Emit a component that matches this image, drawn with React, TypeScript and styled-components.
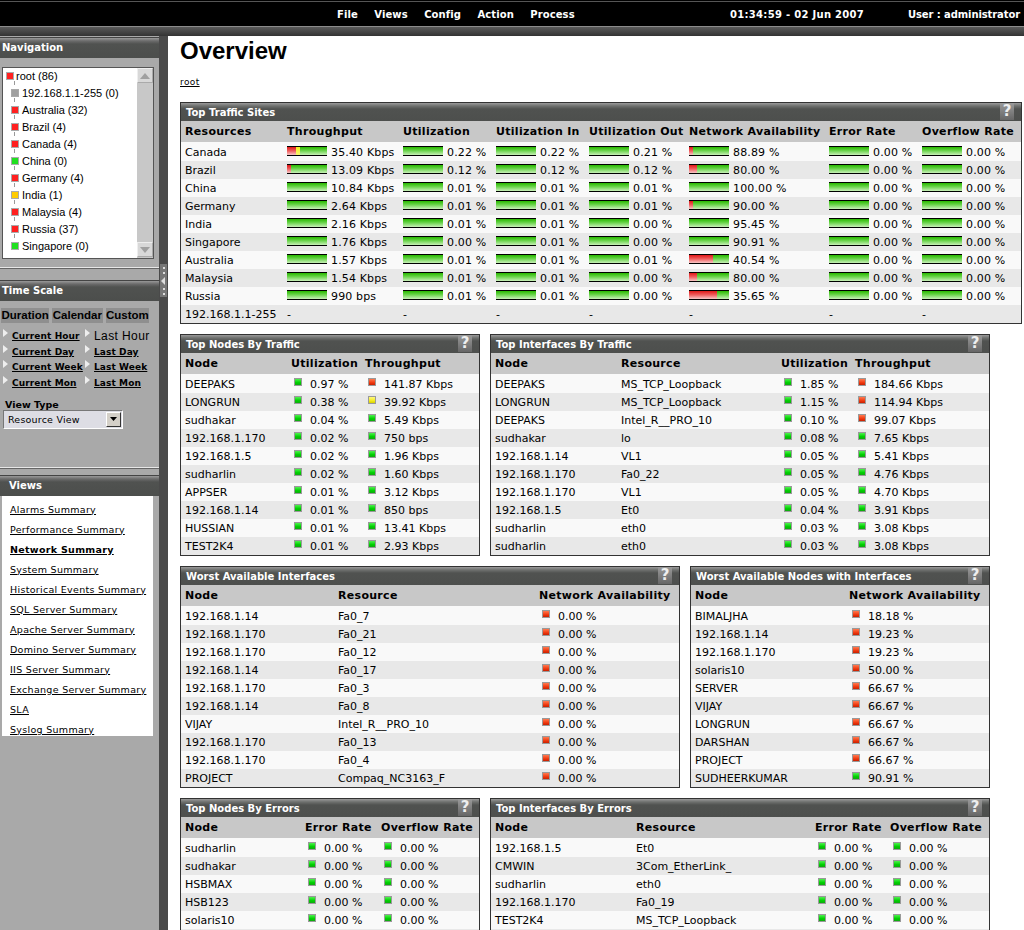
import React, { FC } from "react";
import styled, { createGlobalStyle } from "styled-components";

type Tone = "g" | "r" | "y";
type Cell = string | { tone: Tone; text: string } | { red: number; yellow?: number; text: string };

const GlobalStyle = createGlobalStyle`
  html, body {
    margin: 0;
    padding: 0;
    height: 100%;
    overflow: hidden;
    background: #fff;
    font-family: "DejaVu Sans", Verdana, sans-serif;
    font-size: 11px;
    color: #000;
  }
`;

const g = (text: string): Cell => ({ tone: "g", text });
const r = (text: string): Cell => ({ tone: "r", text });
const y = (text: string): Cell => ({ tone: "y", text });
const b = (text: string, red = 0, yellow = 0): Cell => ({ red, yellow, text });

const zero = [b("0.00 %"), b("0.00 %")];

const trafficSites: Cell[][] = [
  ["Canada", b("35.40 Kbps", 9, 4), b("0.22 %"), b("0.22 %"), b("0.21 %"), b("88.89 %", 4), ...zero],
  ["Brazil", b("13.09 Kbps", 4), b("0.12 %"), b("0.12 %"), b("0.12 %"), b("80.00 %", 8), ...zero],
  ["China", b("10.84 Kbps"), b("0.01 %"), b("0.01 %"), b("0.01 %"), b("100.00 %"), ...zero],
  ["Germany", b("2.64 Kbps"), b("0.01 %"), b("0.01 %"), b("0.01 %"), b("90.00 %", 4), ...zero],
  ["India", b("2.16 Kbps"), b("0.01 %"), b("0.01 %"), b("0.00 %"), b("95.45 %"), ...zero],
  ["Singapore", b("1.76 Kbps"), b("0.00 %"), b("0.01 %"), b("0.00 %"), b("90.91 %"), ...zero],
  ["Australia", b("1.57 Kbps"), b("0.01 %"), b("0.01 %"), b("0.01 %"), b("40.54 %", 24), ...zero],
  ["Malaysia", b("1.54 Kbps"), b("0.01 %"), b("0.01 %"), b("0.00 %"), b("80.00 %", 8), ...zero],
  ["Russia", b("990 bps"), b("0.01 %"), b("0.01 %"), b("0.00 %"), b("35.65 %", 28), ...zero],
  ["192.168.1.1-255", "-", "-", "-", "-", "-", "-", "-"],
];

const nodesTraffic: Cell[][] = [
  ["DEEPAKS", g("0.97 %"), r("141.87 Kbps")],
  ["LONGRUN", g("0.38 %"), y("39.92 Kbps")],
  ["sudhakar", g("0.04 %"), g("5.49 Kbps")],
  ["192.168.1.170", g("0.02 %"), g("750 bps")],
  ["192.168.1.5", g("0.02 %"), g("1.96 Kbps")],
  ["sudharlin", g("0.02 %"), g("1.60 Kbps")],
  ["APPSER", g("0.01 %"), g("3.12 Kbps")],
  ["192.168.1.14", g("0.01 %"), g("850 bps")],
  ["HUSSIAN", g("0.01 %"), g("13.41 Kbps")],
  ["TEST2K4", g("0.01 %"), g("2.93 Kbps")],
];

const interfacesTraffic: Cell[][] = [
  ["DEEPAKS", "MS_TCP_Loopback", g("1.85 %"), r("184.66 Kbps")],
  ["LONGRUN", "MS_TCP_Loopback", g("1.15 %"), r("114.94 Kbps")],
  ["DEEPAKS", "Intel_R__PRO_10", g("0.10 %"), r("99.07 Kbps")],
  ["sudhakar", "lo", g("0.08 %"), g("7.65 Kbps")],
  ["192.168.1.14", "VL1", g("0.05 %"), g("5.41 Kbps")],
  ["192.168.1.170", "Fa0_22", g("0.05 %"), g("4.76 Kbps")],
  ["192.168.1.170", "VL1", g("0.05 %"), g("4.70 Kbps")],
  ["192.168.1.5", "Et0", g("0.04 %"), g("3.91 Kbps")],
  ["sudharlin", "eth0", g("0.03 %"), g("3.08 Kbps")],
  ["sudharlin", "eth0", g("0.03 %"), g("3.08 Kbps")],
];

const worstInterfaces: Cell[][] = [
  ["192.168.1.14", "Fa0_7", r("0.00 %")],
  ["192.168.1.170", "Fa0_21", r("0.00 %")],
  ["192.168.1.170", "Fa0_12", r("0.00 %")],
  ["192.168.1.14", "Fa0_17", r("0.00 %")],
  ["192.168.1.170", "Fa0_3", r("0.00 %")],
  ["192.168.1.14", "Fa0_8", r("0.00 %")],
  ["VIJAY", "Intel_R__PRO_10", r("0.00 %")],
  ["192.168.1.170", "Fa0_13", r("0.00 %")],
  ["192.168.1.170", "Fa0_4", r("0.00 %")],
  ["PROJECT", "Compaq_NC3163_F", r("0.00 %")],
];

const worstNodes: Cell[][] = [
  ["BIMALJHA", r("18.18 %")],
  ["192.168.1.14", r("19.23 %")],
  ["192.168.1.170", r("19.23 %")],
  ["solaris10", r("50.00 %")],
  ["SERVER", r("66.67 %")],
  ["VIJAY", r("66.67 %")],
  ["LONGRUN", r("66.67 %")],
  ["DARSHAN", r("66.67 %")],
  ["PROJECT", r("66.67 %")],
  ["SUDHEERKUMAR", g("90.91 %")],
];

const nodesErrors: Cell[][] = ["sudharlin", "sudhakar", "HSBMAX", "HSB123", "solaris10"].map((n) => [
  n,
  g("0.00 %"),
  g("0.00 %"),
]);

const interfacesErrors: Cell[][] = [
  ["192.168.1.5", "Et0"],
  ["CMWIN", "3Com_EtherLink_"],
  ["sudharlin", "eth0"],
  ["192.168.1.170", "Fa0_19"],
  ["TEST2K4", "MS_TCP_Loopback"],
].map((row) => [...row, g("0.00 %"), g("0.00 %")]);

const treeItems: { name: string; color: string }[] = [
  { name: "192.168.1.1-255 (0)", color: "#a0a0a0" },
  { name: "Australia (32)", color: "#ff2020" },
  { name: "Brazil (4)", color: "#ff2020" },
  { name: "Canada (4)", color: "#ff2020" },
  { name: "China (0)", color: "#20e020" },
  { name: "Germany (4)", color: "#ff2020" },
  { name: "India (1)", color: "#ffcc00" },
  { name: "Malaysia (4)", color: "#ff2020" },
  { name: "Russia (37)", color: "#ff2020" },
  { name: "Singapore (0)", color: "#20e020" },
];

const views = [
  "Alarms Summary",
  "Performance Summary",
  "Network Summary",
  "System Summary",
  "Historical Events Summary",
  "SQL Server Summary",
  "Apache Server Summary",
  "Domino Server Summary",
  "IIS Server Summary",
  "Exchange Server Summary",
  "SLA",
  "Syslog Summary",
];

const DataCell: FC<{ cell: Cell }> = ({ cell }) => {
  if (typeof cell === "string") return <span>{cell}</span>;
  if ("tone" in cell) {
    return (
      <DotCell>
        <Dot $tone={cell.tone} />
        {cell.text}
      </DotCell>
    );
  }
  const yellow = cell.yellow ?? 0;
  return (
    <BarCell>
      <Bar>
        {cell.red > 0 && <RedPart style={{ width: cell.red }} />}
        {yellow > 0 && <YellowPart style={{ width: yellow }} />}
      </Bar>
      {cell.text}
    </BarCell>
  );
};

const Panel: FC<{
  title: string;
  width: number;
  columns: string;
  heads: string[];
  rows: Cell[][];
  open?: boolean;
}> = ({ title, width, columns, heads, rows, open }) => (
  <PanelBox $width={width}>
    <PanelHead>
      {title}
      <Help>?</Help>
    </PanelHead>
    <ColumnHead $columns={columns}>
      {heads.map((h) => (
        <span key={h}>{h}</span>
      ))}
    </ColumnHead>
    <Rows>
      {rows.map((row, i) => (
        <Row key={i} $columns={columns}>
          {row.map((cell, j) => (
            <DataCell key={j} cell={cell} />
          ))}
        </Row>
      ))}
      {open && <Row $columns={columns} />}
    </Rows>
  </PanelBox>
);

export default function App() {
  return (
    <Page>
      <GlobalStyle />
      <TopBar>
        <Menu>
          <span>File</span>
          <span>Views</span>
          <span>Config</span>
          <span>Action</span>
          <span>Process</span>
        </Menu>
        <Clock>01:34:59 - 02 Jun 2007</Clock>
        <UserName>User : administrator</UserName>
      </TopBar>
      <Strip />
      <Body>
        <Sidebar>
          <SideHead>Navigation</SideHead>
          <TreeBox>
            <Tree>
              <TreeRow>
                <Square $color="#ff2020" />
                root (86)
              </TreeRow>
              {treeItems.map((item) => (
                <TreeRow key={item.name} $child>
                  <Square $color={item.color} $linked />
                  {item.name}
                </TreeRow>
              ))}
            </Tree>
            <ScrollTrack>
              <ScrollButton>
                <svg width="10" height="6" viewBox="0 0 10 6">
                  <path d="M5 0 L10 6 L0 6 Z" fill="#a0a0a0" />
                </svg>
              </ScrollButton>
              <ScrollButton>
                <svg width="10" height="6" viewBox="0 0 10 6">
                  <path d="M0 0 L10 0 L5 6 Z" fill="#a0a0a0" />
                </svg>
              </ScrollButton>
            </ScrollTrack>
          </TreeBox>
          <SideBand />
          <SideHead>Time Scale</SideHead>
          <Tabs>
            <Tab>Duration</Tab>
            <Tab>Calendar</Tab>
            <Tab>Custom</Tab>
          </Tabs>
          <TimeLinks>
            <TimeLink>Current Hour</TimeLink>
            <TimeLink $plain>Last Hour</TimeLink>
            <TimeLink>Current Day</TimeLink>
            <TimeLink>Last Day</TimeLink>
            <TimeLink>Current Week</TimeLink>
            <TimeLink>Last Week</TimeLink>
            <TimeLink>Current Mon</TimeLink>
            <TimeLink>Last Mon</TimeLink>
          </TimeLinks>
          <ViewTypeLabel>View Type</ViewTypeLabel>
          <ViewSelect>
            Resource View
            <SelectButton>
              <svg width="7" height="4" viewBox="0 0 7 4">
                <path d="M0 0 L7 0 L3.5 4 Z" fill="#000" />
              </svg>
            </SelectButton>
          </ViewSelect>
          <ViewsRule />
          <SideHead $indent>Views</SideHead>
          <ViewList>
            {views.map((v) => (
              <ViewLink key={v} $active={v === "Network Summary"}>
                {v}
              </ViewLink>
            ))}
          </ViewList>
        </Sidebar>
        <Divider>
          <Handle>
            <svg width="7" height="33" viewBox="0 0 7 33">
              <rect x="3" y="3" width="2" height="2" fill="#ddd" />
              <rect x="3" y="8" width="2" height="2" fill="#ddd" />
              <path d="M1 17 L5 13 L5 21 Z" fill="#ddd" />
              <rect x="3" y="24" width="2" height="2" fill="#ddd" />
              <rect x="3" y="29" width="2" height="2" fill="#ddd" />
            </svg>
          </Handle>
        </Divider>
        <Content>
          <Title>Overview</Title>
          <Crumb>root</Crumb>
          <Panels>
            <Panel
              title="Top Traffic Sites"
              width={842}
              columns="102px 116px 93px 93px 100px 140px 93px 1fr"
              heads={[
                "Resources",
                "Throughput",
                "Utilization",
                "Utilization In",
                "Utilization Out",
                "Network Availability",
                "Error Rate",
                "Overflow Rate",
              ]}
              rows={trafficSites}
            />
            <PanelRow>
              <Panel
                title="Top Nodes By Traffic"
                width={300}
                columns="106px 74px 1fr"
                heads={["Node", "Utilization", "Throughput"]}
                rows={nodesTraffic}
              />
              <Panel
                title="Top Interfaces By Traffic"
                width={500}
                columns="126px 160px 74px 1fr"
                heads={["Node", "Resource", "Utilization", "Throughput"]}
                rows={interfacesTraffic}
              />
            </PanelRow>
            <PanelRow>
              <Panel
                title="Worst Available Interfaces"
                width={500}
                columns="153px 201px 1fr"
                heads={["Node", "Resource", "Network Availability"]}
                rows={worstInterfaces}
              />
              <Panel
                title="Worst Available Nodes with Interfaces"
                width={300}
                columns="154px 1fr"
                heads={["Node", "Network Availability"]}
                rows={worstNodes}
              />
            </PanelRow>
            <PanelRow>
              <Panel
                title="Top Nodes By Errors"
                width={300}
                columns="120px 76px 1fr"
                heads={["Node", "Error Rate", "Overflow Rate"]}
                rows={nodesErrors}
                open
              />
              <Panel
                title="Top Interfaces By Errors"
                width={500}
                columns="141px 179px 75px 1fr"
                heads={["Node", "Resource", "Error Rate", "Overflow Rate"]}
                rows={interfacesErrors}
                open
              />
            </PanelRow>
          </Panels>
        </Content>
      </Body>
    </Page>
  );
}

const Page = styled.div`
  height: 930px;
  overflow: hidden;
  display: flex;
  flex-direction: column;
`;

const TopBar = styled.header`
  height: 27px;
  box-sizing: border-box;
  background: #000;
  border-top: 1px solid #000;
  border-bottom: 1px solid #8c8c8c;
  box-shadow: inset 0 1px 0 #555;
  display: flex;
  align-items: center;
  color: #fff;
  font-size: 10px;
  font-weight: bold;
  padding-top: 2px;
`;

const Menu = styled.nav`
  margin-left: 337px;
  width: 393px;
  display: flex;
  gap: 16.4px;
  letter-spacing: 0.1px;
`;

const Clock = styled.div`
  width: 178px;
  letter-spacing: 0.3px;
`;

const UserName = styled.div`
  white-space: nowrap;
  letter-spacing: -0.1px;
`;

const Strip = styled.div`
  height: 9px;
  background: linear-gradient(#5a5a5a, #333);
`;

const Body = styled.div`
  flex: 1;
  display: flex;
  min-height: 0;
`;

const Sidebar = styled.aside`
  width: 159px;
  flex: none;
  background: #a9a9a9;
  padding-top: 1px;
`;

const SideHead = styled.div<{ $indent?: boolean }>`
  height: 21px;
  box-sizing: border-box;
  border-top: 1px solid #444;
  background: linear-gradient(#999 0, #6b6b6b 3px, #505250 6px, #4c4e4c 100%);
  color: #fff;
  font-size: 10px;
  font-weight: bold;
  line-height: 20px;
  padding-left: ${(p) => (p.$indent ? "9px" : "2px")};
`;

const TreeBox = styled.div`
  margin: 9px 5px 0 2px;
  height: 192px;
  box-sizing: border-box;
  border: 1px solid #555;
  background: #fff;
  display: flex;
  justify-content: space-between;
`;

const Tree = styled.ul`
  list-style: none;
  margin: -1px 0 0;
  padding: 0;
  font-family: "Liberation Sans", Arial, sans-serif;
  font-size: 11px;
`;

const TreeRow = styled.li<{ $child?: boolean }>`
  height: 17px;
  display: flex;
  align-items: center;
  gap: ${(p) => (p.$child ? "3px" : "2px")};
  padding-left: ${(p) => (p.$child ? "8px" : "3px")};
  white-space: nowrap;
`;

const Square = styled.span<{ $color: string; $linked?: boolean }>`
  position: relative;
  width: 6px;
  height: 6px;
  background: ${(p) => p.$color};
  border: 1px solid #aaa;
  &::before {
    content: "";
    display: ${(p) => (p.$linked ? "block" : "none")};
    position: absolute;
    left: 2px;
    top: -9px;
    width: 1px;
    height: 4px;
    background: #999;
  }
`;

const ScrollTrack = styled.div`
  width: 16px;
  background: #c8c8c8;
  display: flex;
  flex-direction: column;
  justify-content: space-between;
  padding-bottom: 1px;
`;

const ScrollButton = styled.div`
  height: 15px;
  background: #d8d8d8;
  border: 1px solid;
  border-color: #eee #aaa #aaa #eee;
  box-sizing: border-box;
  display: flex;
  align-items: center;
  justify-content: center;
`;

const SideBand = styled.div`
  margin-top: 8px;
  height: 13px;
  box-sizing: border-box;
  border-top: 1px solid #e8e8e8;
  box-shadow: inset 0 1px 0 #666;
`;

const Tabs = styled.div`
  margin: 7px 0 0 1px;
  display: flex;
  gap: 3px;
`;

const Tab = styled.div`
  background: #8f8f8f;
  font-family: "Liberation Sans", Arial, sans-serif;
  font-size: 11.5px;
  font-weight: bold;
  line-height: 15px;
  padding: 0 0.5px;
  white-space: nowrap;
`;

const TimeLinks = styled.div`
  margin: 6px 0 0 3px;
  display: grid;
  grid-template-columns: 82px 1fr;
  grid-auto-rows: 15px;
  row-gap: 0.5px;
`;

const TimeLink = styled.div<{ $plain?: boolean }>`
  position: relative;
  line-height: 15px;
  padding-left: 9px;
  white-space: nowrap;
  font-family: ${(p) => (p.$plain ? '"Liberation Sans", Arial, sans-serif' : "inherit")};
  font-size: ${(p) => (p.$plain ? "12px" : "9px")};
  letter-spacing: ${(p) => (p.$plain ? "0.4px" : "0.1px")};
  font-weight: ${(p) => (p.$plain ? "normal" : "bold")};
  text-decoration: ${(p) => (p.$plain ? "none" : "underline")};
  &::before {
    content: "";
    position: absolute;
    left: 0;
    top: 0;
    border-left: 5px solid #eee;
    border-top: 4px solid transparent;
    border-bottom: 4px solid transparent;
  }
`;

const ViewTypeLabel = styled.div`
  margin: 7px 0 0 5px;
  font-size: 9.5px;
  font-weight: bold;
  line-height: 14px;
`;

const ViewSelect = styled.div`
  margin: -2px 0 0 3px;
  width: 120px;
  height: 19px;
  box-sizing: border-box;
  border: 1px solid;
  border-color: #777 #fff #fff #777;
  background: #dddde4;
  font-size: 9.5px;
  letter-spacing: 0.2px;
  line-height: 17px;
  padding-left: 4px;
  position: relative;
`;

const SelectButton = styled.span`
  position: absolute;
  right: 1px;
  top: 1px;
  width: 15px;
  height: 15px;
  box-sizing: border-box;
  background: #d4d0c8;
  border: 1px solid;
  border-color: #fff #333 #333 #fff;
  display: flex;
  align-items: center;
  justify-content: center;
`;

const ViewsRule = styled.div`
  margin-top: 38px;
  height: 8px;
  box-sizing: border-box;
  border-top: 1px solid #e8e8e8;
  box-shadow: inset 0 1px 0 #666;
`;

const ViewList = styled.div`
  margin: 0 6px 0 2px;
  padding: 4px 0 0 8px;
  height: 240px;
  box-sizing: border-box;
  background: #fff;
`;

const ViewLink = styled.div<{ $active?: boolean }>`
  height: 20px;
  line-height: 20px;
  font-size: 9.5px;
  letter-spacing: 0.3px;
  white-space: nowrap;
  text-decoration: underline;
  font-weight: ${(p) => (p.$active ? "bold" : "normal")};
`;

const Divider = styled.div`
  width: 9px;
  flex: none;
  background: #4a4a4a;
  position: relative;
`;

const Handle = styled.div`
  position: absolute;
  left: 1px;
  top: 228px;
  width: 7px;
  height: 33px;
  background: #777;
  line-height: 0;
`;

const Content = styled.main`
  flex: 1;
  min-width: 0;
  background: #fff;
  padding: 0 0 0 12px;
`;

const Title = styled.h1`
  margin: 0;
  height: 31px;
  font-family: "Liberation Sans", Arial, sans-serif;
  font-size: 24px;
  line-height: 30px;
  font-weight: bold;
`;

const Crumb = styled.div`
  margin-top: 8px;
  height: 27px;
  font-size: 9px;
  letter-spacing: 0.4px;
  line-height: 14px;
  text-decoration: underline;
`;

const Panels = styled.div`
  display: flex;
  flex-direction: column;
  gap: 10px;
`;

const PanelRow = styled.div`
  display: flex;
  gap: 10px;
`;

const PanelBox = styled.section<{ $width: number }>`
  width: ${(p) => p.$width}px;
  box-sizing: border-box;
  border: 1px solid #333;
  flex: none;
`;

const PanelHead = styled.div`
  height: 18px;
  background: linear-gradient(#9a9a9a 0, #6e706e 3px, #505250 6px, #4d4f4d 100%);
  color: #fff;
  font-size: 10px;
  font-weight: bold;
  line-height: 20px;
  padding: 0 6px 0 5px;
  display: flex;
  justify-content: space-between;
`;

const Help = styled.span`
  width: 14px;
  height: 17px;
  margin-right: 1px;
  background: linear-gradient(#9a9a9a, #666);
  color: #eee;
  font-size: 15px;
  line-height: 17px;
  text-align: center;
`;

const ColumnHead = styled.div<{ $columns: string }>`
  height: 21px;
  background: #c8c8c8;
  display: grid;
  grid-template-columns: ${(p) => p.$columns};
  align-items: center;
  padding-left: 4px;
  font-weight: bold;
  letter-spacing: 0.3px;
  white-space: nowrap;
`;

const Rows = styled.div`
  padding-top: 1px;
  background: #f9f9f9;
`;

const Row = styled.div<{ $columns: string }>`
  height: 18px;
  display: grid;
  grid-template-columns: ${(p) => p.$columns};
  align-items: center;
  padding-left: 4px;
  white-space: nowrap;
  &:nth-child(even) {
    background: #e8e8e8;
  }
`;

const DotCell = styled.span`
  display: flex;
  align-items: center;
  padding-left: 3px;
  gap: 8px;
`;

const toneColors: Record<Tone, string> = {
  g: "#50f050, #00d000 60%, #10a810",
  r: "#ff7a50, #f03a10 60%, #c82000",
  y: "#fff880, #f4ec20 60%, #d8d000",
};

const Dot = styled.i<{ $tone: Tone }>`
  width: 6px;
  height: 6px;
  flex: none;
  margin-top: -4px;
  border: 1px solid #999;
  background: linear-gradient(${(p) => toneColors[p.$tone]});
`;

const BarCell = styled.span`
  display: flex;
  align-items: center;
  gap: 4px;
  letter-spacing: 0.15px;
`;

const Bar = styled.span`
  width: 40px;
  height: 8px;
  flex: none;
  display: flex;
  margin-top: -3px;
  border-top: 1px solid #000;
  border-bottom: 1px solid #000;
  background: linear-gradient(#28b800, #60d040 40%, #c8f0b8);
`;

const RedPart = styled.span`
  height: 100%;
  background: linear-gradient(#e01818, #f06060 50%, #f8c8c8);
`;

const YellowPart = styled.span`
  height: 100%;
  background: linear-gradient(#f0f020, #f8f870);
`;
